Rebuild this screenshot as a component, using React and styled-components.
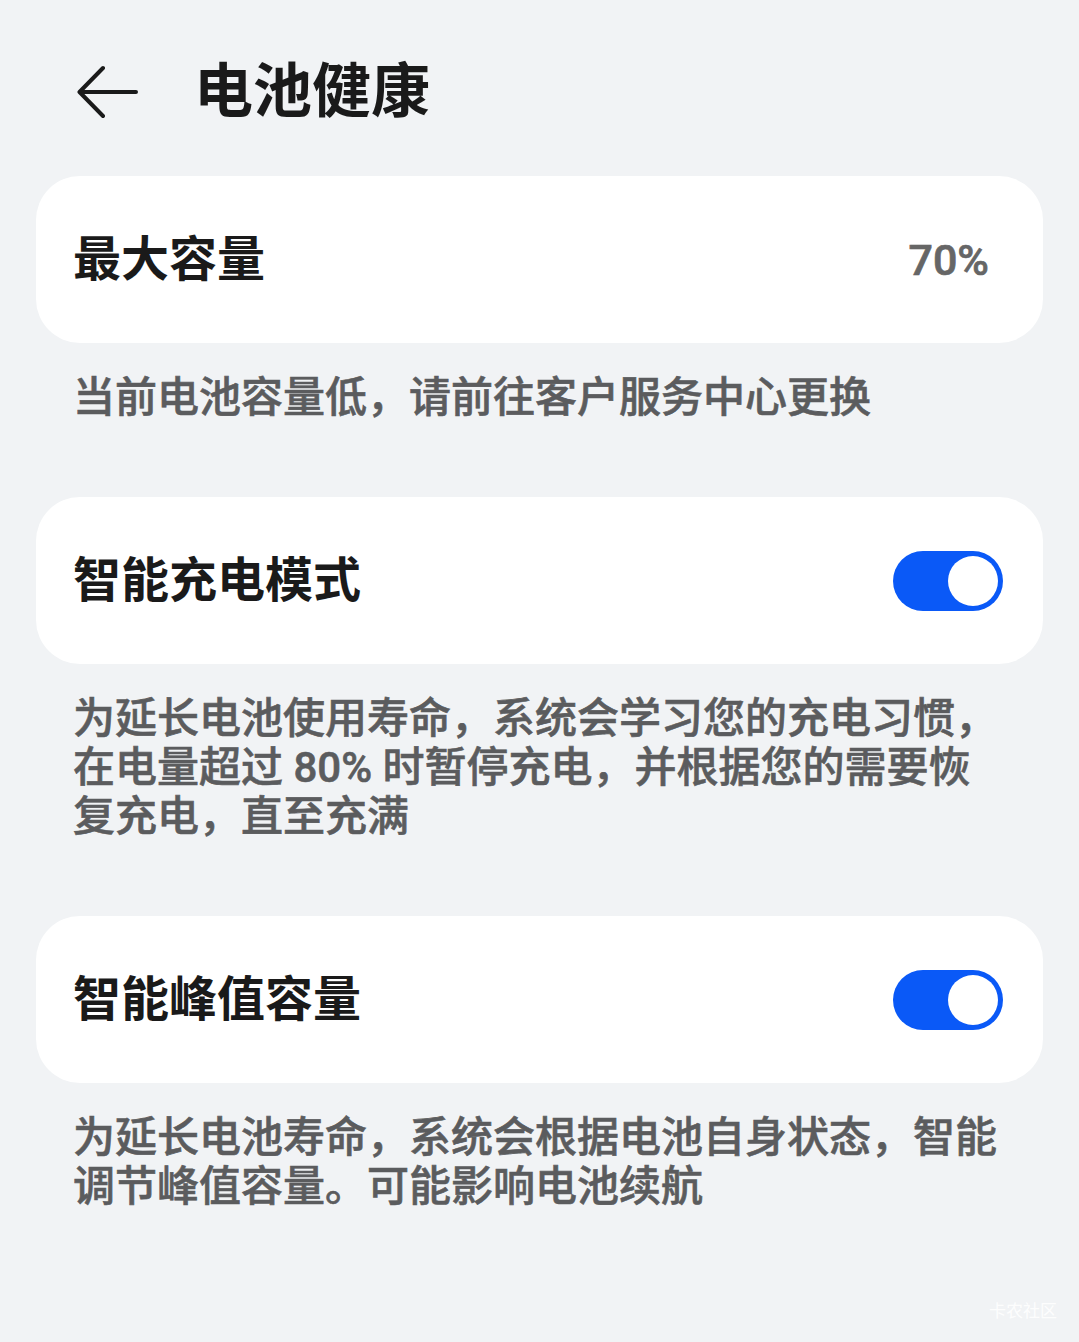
import styled, { createGlobalStyle } from "styled-components";

const GlobalStyle = createGlobalStyle`
  html, body {
    margin: 0;
    padding: 0;
    background: #f1f3f5;
  }
  * {
    box-sizing: border-box;
  }
`;

const Page = styled.div`
  position: relative;
  min-height: 1342px;
  padding: 50px 36px 0 36px;
  background: #f1f3f5;
  font-family: "Roboto", "Noto Sans CJK SC", sans-serif;
`;

const Header = styled.div`
  display: flex;
  align-items: center;
  height: 84px;
  margin-bottom: 42px;
`;

const BackButton = styled.div`
  display: flex;
  align-items: center;
  width: 158px;
  padding-left: 41px;
  color: #1a1a1a;
`;

const PageTitle = styled.h1`
  margin: 0;
  font-size: 59px;
  font-weight: 700;
  line-height: 84px;
  color: #1a1a1a;
`;

const Card = styled.div`
  display: flex;
  align-items: center;
  justify-content: space-between;
  height: 167px;
  padding: 0 40px 0 37px;
  background: #ffffff;
  border-radius: 44px;
`;

const CardTitle = styled.div`
  font-size: 48px;
  font-weight: 700;
  color: #1a1a1a;
  line-height: 60px;
`;

const Value = styled.div`
  margin-right: 14px;
  font-size: 43px;
  font-weight: 500;
  color: #666666;
  -webkit-text-stroke: 0.7px #666666;
`;

const Caption = styled.div`
  padding: 30px 0 75px 37px;
  font-size: 42px;
  font-weight: 500;
  line-height: 49px;
  color: #5b5c5e;
  -webkit-text-stroke: 0.6px #5b5c5e;
`;

const Line = styled.span`
  display: block;
  white-space: nowrap;
`;

const Switch = styled.div`
  display: flex;
  align-items: center;
  justify-content: ${(p) => (p.$on ? "flex-end" : "flex-start")};
  width: 110px;
  height: 60px;
  padding: 5px;
  border-radius: 30px;
  background: ${(p) => (p.$on ? "#0a59f7" : "#d5d7da")};
`;

const Knob = styled.div`
  width: 50px;
  height: 50px;
  border-radius: 50%;
  background: #ffffff;
`;

const Watermark = styled.div`
  position: absolute;
  right: 22px;
  bottom: 20px;
  font-size: 17px;
  color: rgba(255, 255, 255, 0.9);
  font-family: "Noto Sans CJK SC", sans-serif;
`;

function BackArrow() {
  return (
    <svg width="62" height="56" viewBox="0 0 62 56" fill="none">
      <path
        d="M59 28H3M26 4L2.5 28L26 52"
        stroke="currentColor"
        strokeWidth="4"
        strokeLinecap="round"
        strokeLinejoin="round"
      />
    </svg>
  );
}

function Setting({ title, value, toggle, lines }) {
  return (
    <>
      <Card>
        <CardTitle>{title}</CardTitle>
        {value && <Value>{value}</Value>}
        {toggle !== undefined && (
          <Switch $on={toggle}>
            <Knob />
          </Switch>
        )}
      </Card>
      <Caption>
        {lines.map((l) => (
          <Line key={l}>{l}</Line>
        ))}
      </Caption>
    </>
  );
}

export default function App() {
  return (
    <Page>
      <GlobalStyle />
      <Header>
        <BackButton>
          <BackArrow />
        </BackButton>
        <PageTitle>电池健康</PageTitle>
      </Header>
      <Setting
        title="最大容量"
        value="70%"
        lines={["当前电池容量低，请前往客户服务中心更换"]}
      />
      <Setting
        title="智能充电模式"
        toggle={true}
        lines={[
          "为延长电池使用寿命，系统会学习您的充电习惯，",
          "在电量超过 80% 时暂停充电，并根据您的需要恢",
          "复充电，直至充满",
        ]}
      />
      <Setting
        title="智能峰值容量"
        toggle={true}
        lines={[
          "为延长电池寿命，系统会根据电池自身状态，智能",
          "调节峰值容量。可能影响电池续航",
        ]}
      />
      <Watermark>卡农社区</Watermark>
    </Page>
  );
}
